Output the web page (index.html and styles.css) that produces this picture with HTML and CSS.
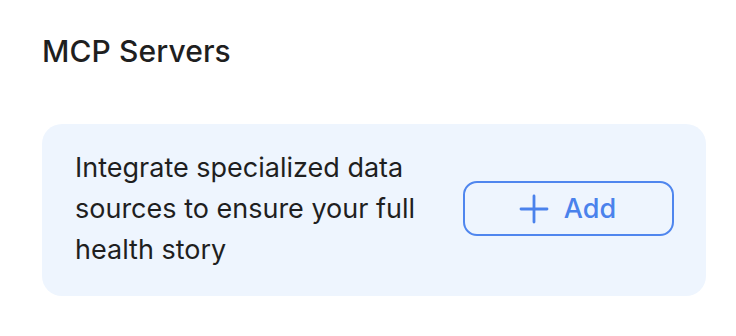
FILE: index.html
```html
<!DOCTYPE html>
<html>
<head>
<meta charset="utf-8">
<link rel="stylesheet" href="styles.css">
</head>
<body>
<section class="panel">
  <h2 class="title">MCP Servers</h2>
  <div class="card">
    <p class="desc">Integrate specialized data sources to ensure your full health story</p>
    <button class="add-btn" type="button">
      <svg class="plus" viewBox="0 0 30 30" width="30" height="30" aria-hidden="true">
        <path d="M15 2v26M2 15h26" stroke="currentColor" stroke-width="2.8" stroke-linecap="round" fill="none"/>
      </svg>
      <span>Add</span>
    </button>
  </div>
</section>
</body>
</html>
```
FILE: styles.css
```css
html, body {
  margin: 0;
  padding: 0;
  background: #ffffff;
}
body {
  font-family: Inter, "Noto Sans", "Liberation Sans", sans-serif;
  color: #1f1f1f;
}
.panel {
  padding: 31px 30px 0 42px;
}
.title {
  margin: 0;
  font-size: 30px;
  font-weight: 500;
  line-height: 40px;
  letter-spacing: 0.1px;
}
.card {
  margin-top: 53px;
  display: flex;
  align-items: center;
  justify-content: space-between;
  background: #eef5fe;
  border-radius: 20px;
  padding: 23px 32px 26px 33px;
}
.desc {
  margin: 0;
  width: 370px;
  font-size: 27px;
  line-height: 41px;
}
.add-btn {
  display: flex;
  align-items: center;
  justify-content: center;
  gap: 15px;
  width: 211px;
  height: 55px;
  border: 2px solid #4f86ee;
  border-radius: 14px;
  background: transparent;
  color: #4a82ec;
  font-family: inherit;
  font-size: 27px;
  font-weight: 500;
  padding: 0 2px 0 0;
}
.plus {
  display: block;
}
```
